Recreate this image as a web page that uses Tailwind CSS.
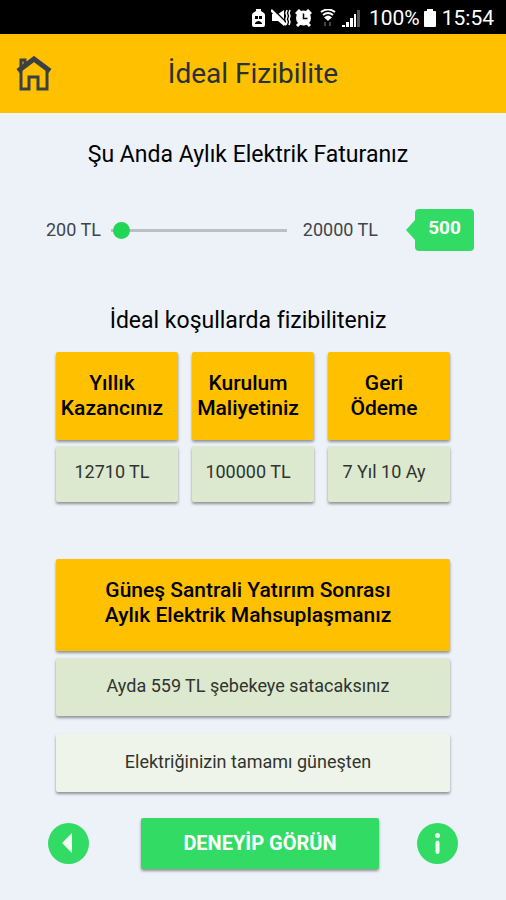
<!DOCTYPE html>
<html lang="tr">

<head>
    <meta charset="UTF-8">
    <meta name="viewport" content="width=device-width, initial-scale=1.0">
    <title>İdeal Fizibilite</title>
    <script src="https://cdn.jsdelivr.net/npm/@tailwindcss/browser@4"></script>
</head>

<body class="bg-[#edf2f9] text-black" style="font-family: Roboto, sans-serif;">
    <!-- Status bar -->
    <div class="flex h-[34px] items-center justify-end bg-black pt-0.5 pr-3 text-[21px] leading-6 text-white">
        <svg class="mr-1.5" width="13" height="18" viewBox="0 0 13 18" fill="white">
            <path d="M4 0h5v2l3 2q1 1 1 2v10q0 2-2 2H2q-2 0-2-2V6q0-1 1-2l3-2z" />
            <path d="M3 7h3v3H3zM7 7h3v3H7zM3 14q3.500-4 7 0v1H3z" fill="black" />
        </svg>
        <svg class="mr-1" width="20" height="18" viewBox="0 0 20 18" fill="white">
            <path d="M1 5h6l6-4v16l-6-5H1z" />
            <path d="M3 1l13 13" stroke="black" stroke-width="1.500" />
            <path d="M0 1l15 15" stroke="white" stroke-width="2.500" />
            <path d="M16 1l-1 3 1 3-1 3 1 3-1 3M19 1l-1 3 1 3-1 3 1 3-1 3" fill="none" stroke="white" stroke-width="1.500" />
        </svg>
        <svg class="mr-2" width="17" height="18" viewBox="0 0 17 18" fill="white">
            <circle cx="8.500" cy="9" r="7.500" />
            <path d="M1 5l4-4M16 5l-4-4M2 17l3-3M15 17l-3-3" stroke="white" stroke-width="3" />
            <path d="M8.500 4.500v5h4" fill="none" stroke="black" stroke-width="1.500" />
        </svg>
        <svg class="mr-1.5" width="16" height="18" viewBox="0 0 16 18" fill="none" stroke="white" stroke-width="2">
            <path d="M1 3q7-5 14 0M3 6q5-4 10 0M5 9q3-3 6 0" />
            <path d="M4 8h8l-4 4z" fill="white" stroke="none" />
            <path d="M5 13v4M10 13v4" stroke="#444" />
        </svg>
        <svg class="mr-2" width="19" height="18" viewBox="0 0 19 18" fill="white">
            <path d="M0 16h3v2H0zM4 13h3v5H4zM8 9h3v9H8zM12 5h2v13h-2z" />
            <path d="M15 1h3v17h-3z" fill="#555" />
        </svg>
        <span>100%</span>
        <svg class="mr-1.5 ml-1" width="12" height="18" viewBox="0 0 12 18" fill="white">
            <path d="M3 0h6v2h2q1 0 1 1v14q0 1-1 1H1q-1 0-1-1V3q0-1 1-1h2z" />
        </svg>
        <span>15:54</span>
    </div>

    <!-- Header -->
    <header class="grid h-[79px] grid-cols-[1fr_auto_1fr] items-center bg-[#ffc000] px-4 text-[#283038]">
        <a href="#" aria-label="Ana sayfa" class="w-9">
            <svg width="36" height="36" viewBox="0 0 36 36" fill="none" stroke="#3a4046">
                <path d="M5 14v19h8V21h9v12h9V14" stroke-width="3" />
                <path d="M2 15L18 3l16 12" stroke-width="5" />
                <path d="M5 12V4h4v4" stroke-width="3" />
            </svg>
        </a>
        <h1 class="text-[28px] leading-8">İdeal Fizibilite</h1>
    </header>

    <main>
        <h2 class="pt-7 pr-2.5 text-center text-[23px] leading-7">Şu Anda Aylık Elektrik Faturanız</h2>

        <!-- Bill slider -->
        <div class="mt-10 flex items-center pr-8 pl-[46px] text-lg leading-6 text-[#40454a]">
            <label for="bill">200 TL</label>
            <input id="bill" type="range" min="200" max="20000" value="500" class="mr-4 ml-2.5 h-[18px] min-w-0 flex-1 appearance-none bg-transparent [&::-webkit-slider-runnable-track]:h-[3px] [&::-webkit-slider-runnable-track]:bg-[#bcbfc4] [&::-webkit-slider-thumb]:-mt-[7px] [&::-webkit-slider-thumb]:h-[17px] [&::-webkit-slider-thumb]:w-[17px] [&::-webkit-slider-thumb]:appearance-none [&::-webkit-slider-thumb]:rounded-full [&::-webkit-slider-thumb]:bg-[#22d655]">
            <span>20000 TL</span>
            <svg class="ml-7" width="9" height="20" viewBox="0 0 9 20" fill="#32dc64">
                <path d="M9 0v20L0 10z" />
            </svg>
            <output for="bill" class="flex h-[42px] w-[59px] justify-center rounded-sm bg-[#32dc64] pt-[7px] text-[19px] font-bold text-white">500</output>
        </div>

        <h2 class="mt-14 pr-2.5 text-center text-[23px] leading-7">İdeal koşullarda fizibiliteniz</h2>

        <!-- Results -->
        <div class="mt-[17px] grid grid-cols-3 gap-3.5 px-14 text-center">
            <div>
                <h3 class="flex h-[88px] items-center justify-center rounded-xs bg-[#ffc000] pr-2.5 text-[21px] leading-[25px] font-medium shadow-[0_2px_3px_#0006]">Yıllık<br>Kazancınız</h3>
                <p class="mt-1.5 h-14 rounded-xs bg-[#dce9cf] pt-3.5 pr-2.5 text-lg leading-6 text-[#30342e] shadow-[0_2px_3px_#0006]">12710 TL</p>
            </div>
            <div>
                <h3 class="flex h-[88px] items-center justify-center rounded-xs bg-[#ffc000] pr-2.5 text-[21px] leading-[25px] font-medium shadow-[0_2px_3px_#0006]">Kurulum<br>Maliyetiniz</h3>
                <p class="mt-1.5 h-14 rounded-xs bg-[#dce9cf] pt-3.5 pr-2.5 text-lg leading-6 text-[#30342e] shadow-[0_2px_3px_#0006]">100000 TL</p>
            </div>
            <div>
                <h3 class="flex h-[88px] items-center justify-center rounded-xs bg-[#ffc000] pr-2.5 text-[21px] leading-[25px] font-medium shadow-[0_2px_3px_#0006]">Geri<br>Ödeme</h3>
                <p class="mt-1.5 h-14 rounded-xs bg-[#dce9cf] pt-3.5 pr-2.5 text-lg leading-6 text-[#30342e] shadow-[0_2px_3px_#0006]">7 Yıl 10 Ay</p>
            </div>
        </div>

        <!-- Monthly settlement -->
        <div class="mt-[57px] px-14 text-center">
            <h3 class="flex h-[92px] items-center justify-center rounded-xs bg-[#ffc000] pr-2.5 pb-1 text-[21px] leading-[25px] font-medium shadow-[0_2px_3px_#0006]">Güneş Santrali Yatırım Sonrası<br>Aylık Elektrik Mahsuplaşmanız</h3>
            <p class="mt-[7px] h-[58px] rounded-xs bg-[#dce9cf] pt-4 pr-2.5 text-lg leading-6 text-[#30342e] shadow-[0_2px_3px_#0006]">Ayda 559 TL şebekeye satacaksınız</p>
            <p class="mt-[18px] h-[58px] rounded-xs bg-[#eef4e9] pt-4 pr-2.5 text-lg leading-6 text-[#30342e] shadow-[0_2px_3px_#0006]">Elektriğinizin tamamı güneşten</p>
        </div>
    </main>

    <!-- Actions -->
    <div class="flex items-center px-12 pt-[26px] pb-7">
        <button type="button" aria-label="Geri" class="rounded-full">
            <svg width="41" height="41" viewBox="0 0 41 41">
                <circle cx="20.500" cy="20.500" r="20.500" fill="#32dc64" />
                <path d="M24 10v20L14 20z" fill="#f0fbf3" />
            </svg>
        </button>
        <button type="button" class="mr-[38px] ml-[52px] h-[51px] flex-1 rounded-xs bg-[#32dc64] pb-0.5 text-[20px] leading-6 font-bold text-white shadow-[0_2px_3px_#0006]">DENEYİP GÖRÜN</button>
        <button type="button" aria-label="Bilgi" class="rounded-full">
            <svg width="41" height="41" viewBox="0 0 41 41">
                <circle cx="20.500" cy="20.500" r="20.500" fill="#32dc64" />
                <circle cx="20.500" cy="12.500" r="2.500" fill="#f0fbf3" />
                <path d="M20.500 19.500v9.500" stroke="#f0fbf3" stroke-width="4" stroke-linecap="round" />
            </svg>
        </button>
    </div>
</body>

</html>
